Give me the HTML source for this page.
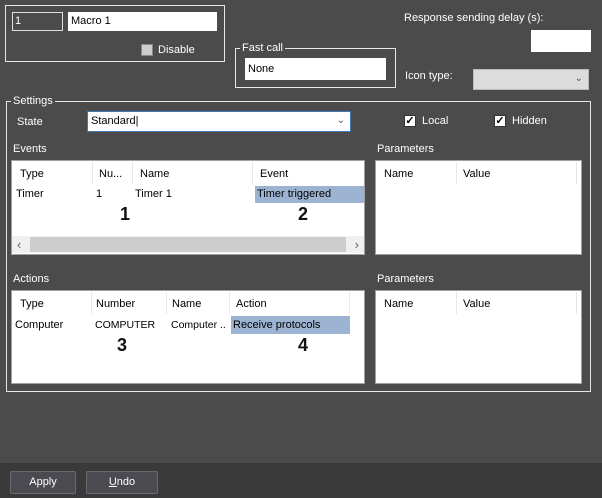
<!DOCTYPE html>
<html><head><meta charset="utf-8"><style>
*{box-sizing:border-box;margin:0;padding:0}
body{width:602px;height:498px;background:#4b4b4b;font-family:"Liberation Sans",sans-serif;font-size:11px;color:#fff;position:relative;overflow:hidden}
.a{position:absolute}
.grp{position:absolute;border:1px solid #e6e6e6}
.lbl{position:absolute;background:#4b4b4b;padding:0 2px;line-height:12px;color:#fff}
.inp{position:absolute;background:#fff;color:#000;padding:3px 3px;line-height:13px}
.tbl{position:absolute;background:#fff;border:1px solid #a0a0a0;color:#000}
.c{position:absolute;line-height:14px;white-space:nowrap}
.h{position:absolute;border-right:1px solid #e8e8e8;height:22px;top:1px}
.sel{background:#9cb4d2}
.num{position:absolute;font-weight:bold;font-size:18px;color:#111}
.cb{position:absolute;width:12px;height:12px;background:#fff;border:1px solid #333;color:#000;font-size:11px;line-height:10px;text-align:center;font-weight:bold}
.btn{position:absolute;background:#4a4a50;border:1px solid #6a6a70;border-radius:2px;text-align:center;line-height:20px;color:#fff}
</style></head><body>
<div class="grp" style="left:5px;top:5px;width:220px;height:57px"></div>
<div class="a" style="left:12px;top:12px;width:51px;height:19px;border:1px solid #ddd;line-height:17px;padding-left:2px">1</div>
<div class="inp" style="left:68px;top:12px;width:149px;height:19px">Macro 1</div>
<div class="a" style="left:141px;top:44px;width:12px;height:12px;border:1px solid #888;background:#ccc"></div>
<div class="c" style="left:158px;top:43px">Disable</div>

<div class="grp" style="left:235px;top:48px;width:161px;height:40px"></div>
<div class="lbl" style="left:240px;top:42px">Fast call</div>
<div class="inp" style="left:245px;top:58px;width:141px;height:22px;padding-top:5px">None</div>

<div class="c" style="left:404px;top:11px">Response sending delay (s):</div>
<div class="a" style="left:531px;top:30px;width:60px;height:22px;background:#fff"></div>
<div class="c" style="left:405px;top:69px">Icon type:</div>
<div class="a" style="left:473px;top:69px;width:116px;height:21px;background:#dcdcdc;border:1px solid #bbb;color:#555;text-align:right;padding-right:5px;line-height:18px;font-size:10px">&#8964;</div>

<div class="grp" style="left:6px;top:101px;width:585px;height:291px"></div>
<div class="lbl" style="left:11px;top:95px">Settings</div>
<div class="c" style="left:17px;top:115px">State</div>
<div class="inp" style="left:87px;top:111px;width:264px;height:21px;border:1px solid #3d7ab8">Standard|<span style="position:absolute;right:5px;top:2px;color:#555;font-size:10px">&#8964;</span></div>
<div class="cb" style="left:404px;top:115px">&#10003;</div><div class="c" style="left:422px;top:114px">Local</div>
<div class="cb" style="left:494px;top:115px">&#10003;</div><div class="c" style="left:512px;top:114px">Hidden</div>

<div class="c" style="left:13px;top:142px">Events</div>
<div class="tbl" style="left:11px;top:160px;width:354px;height:95px">
 <div class="h" style="left:0;width:81px"></div><div class="h" style="left:81px;width:40px"></div><div class="h" style="left:121px;width:120px"></div><div class="h" style="left:241px;width:112px;border:none"></div>
 <div class="c" style="left:8px;top:6px">Type</div><div class="c" style="left:87px;top:6px">Nu...</div><div class="c" style="left:128px;top:6px">Name</div><div class="c" style="left:248px;top:6px">Event</div>
 <div class="c" style="left:4px;top:26px">Timer</div><div class="c" style="left:84px;top:26px">1</div><div class="c" style="left:123px;top:26px">Timer 1</div>
 <div class="c sel" style="left:243px;top:25px;width:109px;height:17px;padding:1px 2px">Timer triggered</div>
 <div class="num" style="left:108px;top:43px">1</div><div class="num" style="left:286px;top:43px">2</div>
 <div class="a" style="left:0;top:75px;width:352px;height:17px;background:#f0f0f0"><div class="a" style="left:18px;top:1px;width:316px;height:15px;background:#cdcdcd"></div><span class="a" style="left:5px;top:0;line-height:17px;color:#666;font-size:13px">&lsaquo;</span><span class="a" style="right:5px;top:0;line-height:17px;color:#666;font-size:13px">&rsaquo;</span></div>
</div>
<div class="c" style="left:377px;top:142px">Parameters</div>
<div class="tbl" style="left:375px;top:160px;width:207px;height:95px">
 <div class="h" style="left:0;width:81px"></div><div class="h" style="left:81px;width:120px"></div>
 <div class="c" style="left:8px;top:6px">Name</div><div class="c" style="left:87px;top:6px">Value</div>
</div>

<div class="c" style="left:13px;top:272px">Actions</div>
<div class="tbl" style="left:11px;top:290px;width:354px;height:94px">
 <div class="h" style="left:0;width:80px"></div><div class="h" style="left:80px;width:75px"></div><div class="h" style="left:155px;width:63px"></div><div class="h" style="left:218px;width:120px"></div>
 <div class="c" style="left:8px;top:6px">Type</div><div class="c" style="left:84px;top:6px">Number</div><div class="c" style="left:160px;top:6px">Name</div><div class="c" style="left:224px;top:6px">Action</div>
 <div class="c" style="left:3px;top:27px">Computer</div><div class="c" style="left:83px;top:27px;font-size:10.5px">COMPUTER</div><div class="c" style="left:159px;top:27px;width:58px;overflow:hidden;font-size:10.5px">Computer ..</div>
 <div class="c sel" style="left:219px;top:25px;width:119px;height:18px;padding:2px 2px">Receive protocols</div>
 <div class="num" style="left:105px;top:44px">3</div><div class="num" style="left:286px;top:44px">4</div>
</div>
<div class="tbl" style="left:375px;top:290px;width:207px;height:94px">
 <div class="h" style="left:0;width:81px"></div><div class="h" style="left:81px;width:120px"></div>
 <div class="c" style="left:8px;top:6px">Name</div><div class="c" style="left:87px;top:6px">Value</div>
</div>
<div class="c" style="left:377px;top:272px">Parameters</div>

<div class="a" style="left:0;top:463px;width:602px;height:35px;background:#3a3a3a"></div>
<div class="btn" style="left:10px;top:471px;width:66px;height:23px">Apply</div>
<div class="btn" style="left:86px;top:471px;width:72px;height:23px"><u>U</u>ndo</div>
</body></html>
